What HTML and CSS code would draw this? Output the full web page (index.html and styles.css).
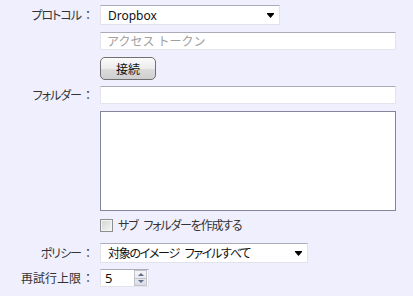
FILE: index.html
```html
<!DOCTYPE html>
<html lang="ja">
<head>
  <meta charset="UTF-8"/>
  <title>同期設定</title>
  <link rel="stylesheet" href="styles.css">
</head>
<body>
  <div class="form">
    <div class="label kana">プロトコル<span class="colon">：</span></div>
    <div class="field">
      <div class="select select-protocol">
        <span>Dropbox</span>
        <span class="arrow"></span>
      </div>
    </div>

    <div class="label"></div>
    <div class="field gap7">
      <input class="text wide" type="text" placeholder="アクセス トークン"/>
    </div>

    <div class="label"></div>
    <div class="field gap7">
      <button class="btn">接続</button>
    </div>

    <div class="label kana gap6">フォルダー<span class="colon">：</span></div>
    <div class="field gap6">
      <input class="text wide" type="text"/>
    </div>

    <div class="label"></div>
    <div class="field gap7">
      <div class="list"></div>
    </div>

    <div class="label"></div>
    <div class="field gap5">
      <label class="check">
        <span class="box"></span>
        <span class="check-text">サブ フォルダーを作成する</span>
      </label>
    </div>

    <div class="label kana gap9">ポリシー<span class="colon">：</span></div>
    <div class="field gap9">
      <div class="select select-policy">
        <span class="policy-text">対象のイメージ ファイルすべて</span>
        <span class="arrow"></span>
      </div>
    </div>

    <div class="label gap6">再試行上限<span class="colon">：</span></div>
    <div class="field gap6">
      <div class="spin">
        <span class="spin-value">5</span>
        <span class="spin-btns">
          <span class="up"></span>
          <span class="down"></span>
        </span>
      </div>
    </div>
  </div>
</body>
</html>
```

FILE: styles.css
```css
body {
  margin: 0;
  background: #efeffd;
  color: #333;
  font-family: "Noto Sans", "Noto Sans CJK JP", sans-serif;
  font-size: 12px;
  font-feature-settings: "palt";
}

.form {
  display: grid;
  grid-template-columns: 100px auto;
  align-items: center;
  padding-top: 5px;
}

.label {
  text-align: right;
  padding-right: 9px;
  white-space: nowrap;
}

.label.kana {
  letter-spacing: -1px;
}

.colon {
  margin-left: 4px;
  letter-spacing: 0;
}

.gap5 { margin-top: 5px; }
.gap6 { margin-top: 6px; }
.gap7 { margin-top: 7px; }
.gap9 { margin-top: 9px; }

.select {
  box-sizing: border-box;
  height: 20px;
  display: flex;
  align-items: center;
  justify-content: space-between;
  padding: 0 5px 0 7px;
  background: #fff;
  border: 1px solid #e2e2ea;
  border-top-color: #ababbb;
  color: #111;
  font-size: 12px;
}

.select-protocol { width: 180px; }
.select-policy { width: 208px; }

.policy-text {
  letter-spacing: -1.3px;
  word-spacing: 4px;
}

.arrow {
  width: 7px;
  height: 5px;
  background: #000;
  clip-path: polygon(0 0, 100% 0, 100% 1px, 50% 100%, 0 1px);
  margin-top: 1px;
}

.text {
  box-sizing: border-box;
  height: 18px;
  margin: 0;
  padding: 0 6px;
  background: #fff;
  border: 1px solid #e4e4ec;
  border-top-color: #ababb9;
  font-family: inherit;
  font-size: 12px;
  color: #111;
  outline: none;
}

.text::placeholder {
  color: #a0a0a0;
}

.wide { width: 296px; display: block; }

.btn {
  box-sizing: border-box;
  width: 56px;
  height: 23px;
  padding: 0;
  border: 1px solid #707070;
  border-radius: 5px;
  background: linear-gradient(#fbfbfb, #ececec 50%, #dcdcdc 51%, #cfcfcf);
  font-family: inherit;
  font-size: 12px;
  color: #111;
  display: block;
}

.list {
  box-sizing: border-box;
  width: 296px;
  height: 100px;
  background: #fff;
  border: 1px solid #84849a;
}

.check {
  display: flex;
  align-items: center;
  gap: 5px;
  height: 18px;
}

.check-text {
  letter-spacing: -1.2px;
  word-spacing: 4px;
}

.box {
  box-sizing: border-box;
  width: 13px;
  height: 13px;
  border: 1px solid #8e8f8f;
  background: linear-gradient(135deg, #d4d4d4, #f6f6f6);
  box-shadow: inset 0 0 0 1px #f4f4f4;
}

.spin {
  box-sizing: border-box;
  width: 49px;
  height: 18px;
  display: flex;
  align-items: center;
  justify-content: space-between;
  background: #fff;
  border: 1px solid #e4e4ec;
  border-top-color: #ababb9;
  padding-left: 4px;
  font-size: 13px;
  color: #111;
}

.spin-btns {
  display: flex;
  flex-direction: column;
  width: 11px;
  height: 14px;
  margin-right: 1px;
  border: 1px solid #c3c3cc;
  background: linear-gradient(#f4f4f8, #dcdce6);
}

.spin-btns span {
  flex: 1;
  display: flex;
  align-items: center;
  justify-content: center;
}

.spin-btns .up {
  border-bottom: 1px solid #c3c3cc;
}

.spin-btns .up::after,
.spin-btns .down::after {
  content: "";
  border-left: 3px solid transparent;
  border-right: 3px solid transparent;
}

.spin-btns .up::after { border-bottom: 3px solid #5d6d8a; }
.spin-btns .down::after { border-top: 3px solid #5d6d8a; }
```
